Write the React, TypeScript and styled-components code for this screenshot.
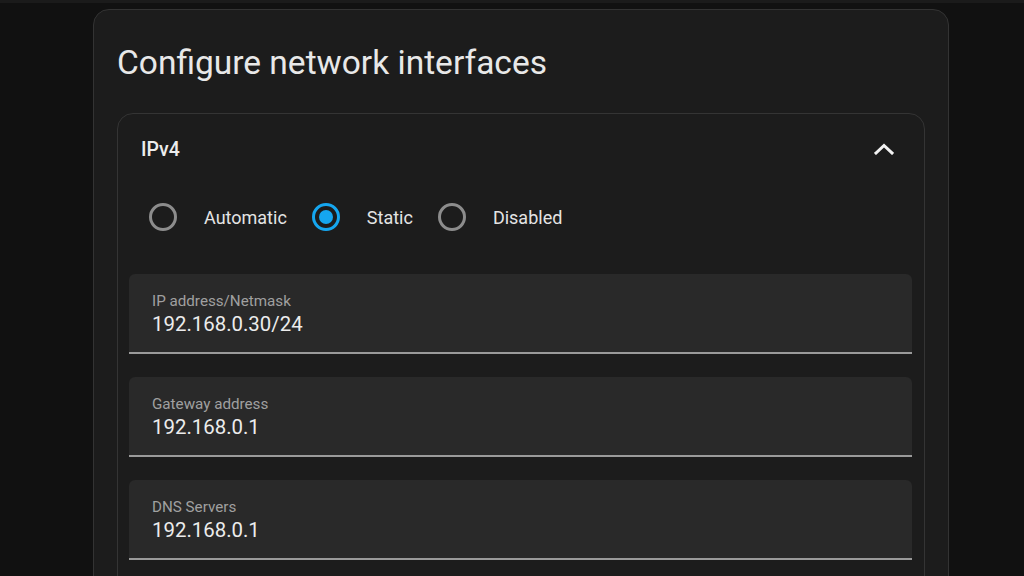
import React, { useState } from "react";
import styled, { createGlobalStyle } from "styled-components";

const Global = createGlobalStyle`
  html, body {
    margin: 0;
    padding: 0;
    background: #111111;
    font-family: Roboto, "Noto Sans", "Liberation Sans", sans-serif;
    -webkit-font-smoothing: antialiased;
  }
  #root { height: 576px; overflow: hidden; }
`;

const Page = styled.div`
  height: 576px;
  box-sizing: border-box;
  border-top: 3px solid #1b1b1b;
  padding: 6px 0 0 93px;
  overflow: hidden;
`;

const Dialog = styled.section`
  width: 856px;
  min-height: 700px;
  box-sizing: border-box;
  background: #1c1c1c;
  border: 1px solid #333333;
  border-radius: 16px;
  padding: 33px 23px 0;
`;

const Title = styled.h1`
  margin: 0 0 30px;
  font-size: 33.5px;
  line-height: 40px;
  font-weight: 400;
  color: #e8e8e8;
  letter-spacing: 0;
`;

const Panel = styled.div`
  box-sizing: border-box;
  border: 1px solid #343434;
  border-radius: 16px;
  background: #1c1c1c;
  min-height: 520px;
`;

const PanelHeader = styled.div`
  height: 70px;
  display: flex;
  align-items: center;
  justify-content: space-between;
  padding: 0 30px 0 23px;
`;

const PanelTitle = styled.span`
  font-size: 19.5px;
  font-weight: 500;
  color: #ececec;
`;

const Chevron = styled.svg`
  width: 20px;
  height: 12px;
  display: block;
`;

const RadioRow = styled.div`
  display: flex;
  align-items: center;
  padding: 19px 0 0 31px;
  height: 28px;
`;

const RadioOption = styled.label`
  display: flex;
  align-items: center;
  margin-right: 25px;
  cursor: pointer;
`;

const RadioCircle = styled.span<{ $checked: boolean }>`
  width: 28px;
  height: 28px;
  box-sizing: border-box;
  border-radius: 50%;
  border: 3px solid ${(p) => (p.$checked ? "#15a6ef" : "#8c8c8c")};
  display: flex;
  align-items: center;
  justify-content: center;
  margin-right: 27px;
  &::after {
    content: "";
    width: 14px;
    height: 14px;
    border-radius: 50%;
    background: ${(p) => (p.$checked ? "#15a6ef" : "transparent")};
  }
`;

const RadioLabel = styled.span`
  font-size: 18px;
  color: #e4e4e4;
`;

const Fields = styled.div`
  display: flex;
  flex-direction: column;
  gap: 23px;
  margin: 43px 12px 0 11px;
`;

const Field = styled.div`
  height: 80px;
  box-sizing: border-box;
  background: #292929;
  border-radius: 6px 6px 0 0;
  border-bottom: 2px solid #9a9a9a;
  padding: 18px 23px 0;
  display: flex;
  flex-direction: column;
  gap: 2px;
`;

const FieldLabel = styled.span`
  font-size: 15.2px;
  line-height: 18px;
  color: #a0a0a0;
`;

const FieldValue = styled.span`
  font-size: 20.4px;
  line-height: 24px;
  color: #ececec;
`;

const options = ["Automatic", "Static", "Disabled"];

const fields = [
  { label: "IP address/Netmask", value: "192.168.0.30/24" },
  { label: "Gateway address", value: "192.168.0.1" },
  { label: "DNS Servers", value: "192.168.0.1" },
];

export default function App() {
  const [mode, setMode] = useState("Static");
  return (
    <>
      <Global />
      <Page>
        <Dialog>
          <Title>Configure network interfaces</Title>
          <Panel>
            <PanelHeader>
              <PanelTitle>IPv4</PanelTitle>
              <Chevron viewBox="0 0 20 12">
                <polyline
                  points="2,10 10,2.5 18,10"
                  fill="none"
                  stroke="#f2f2f2"
                  strokeWidth="3"
                  strokeLinecap="square"
                />
              </Chevron>
            </PanelHeader>
            <RadioRow>
              {options.map((o) => (
                <RadioOption key={o} onClick={() => setMode(o)}>
                  <RadioCircle $checked={mode === o} />
                  <RadioLabel>{o}</RadioLabel>
                </RadioOption>
              ))}
            </RadioRow>
            <Fields>
              {fields.map((f) => (
                <Field key={f.label}>
                  <FieldLabel>{f.label}</FieldLabel>
                  <FieldValue>{f.value}</FieldValue>
                </Field>
              ))}
            </Fields>
          </Panel>
        </Dialog>
      </Page>
    </>
  );
}
